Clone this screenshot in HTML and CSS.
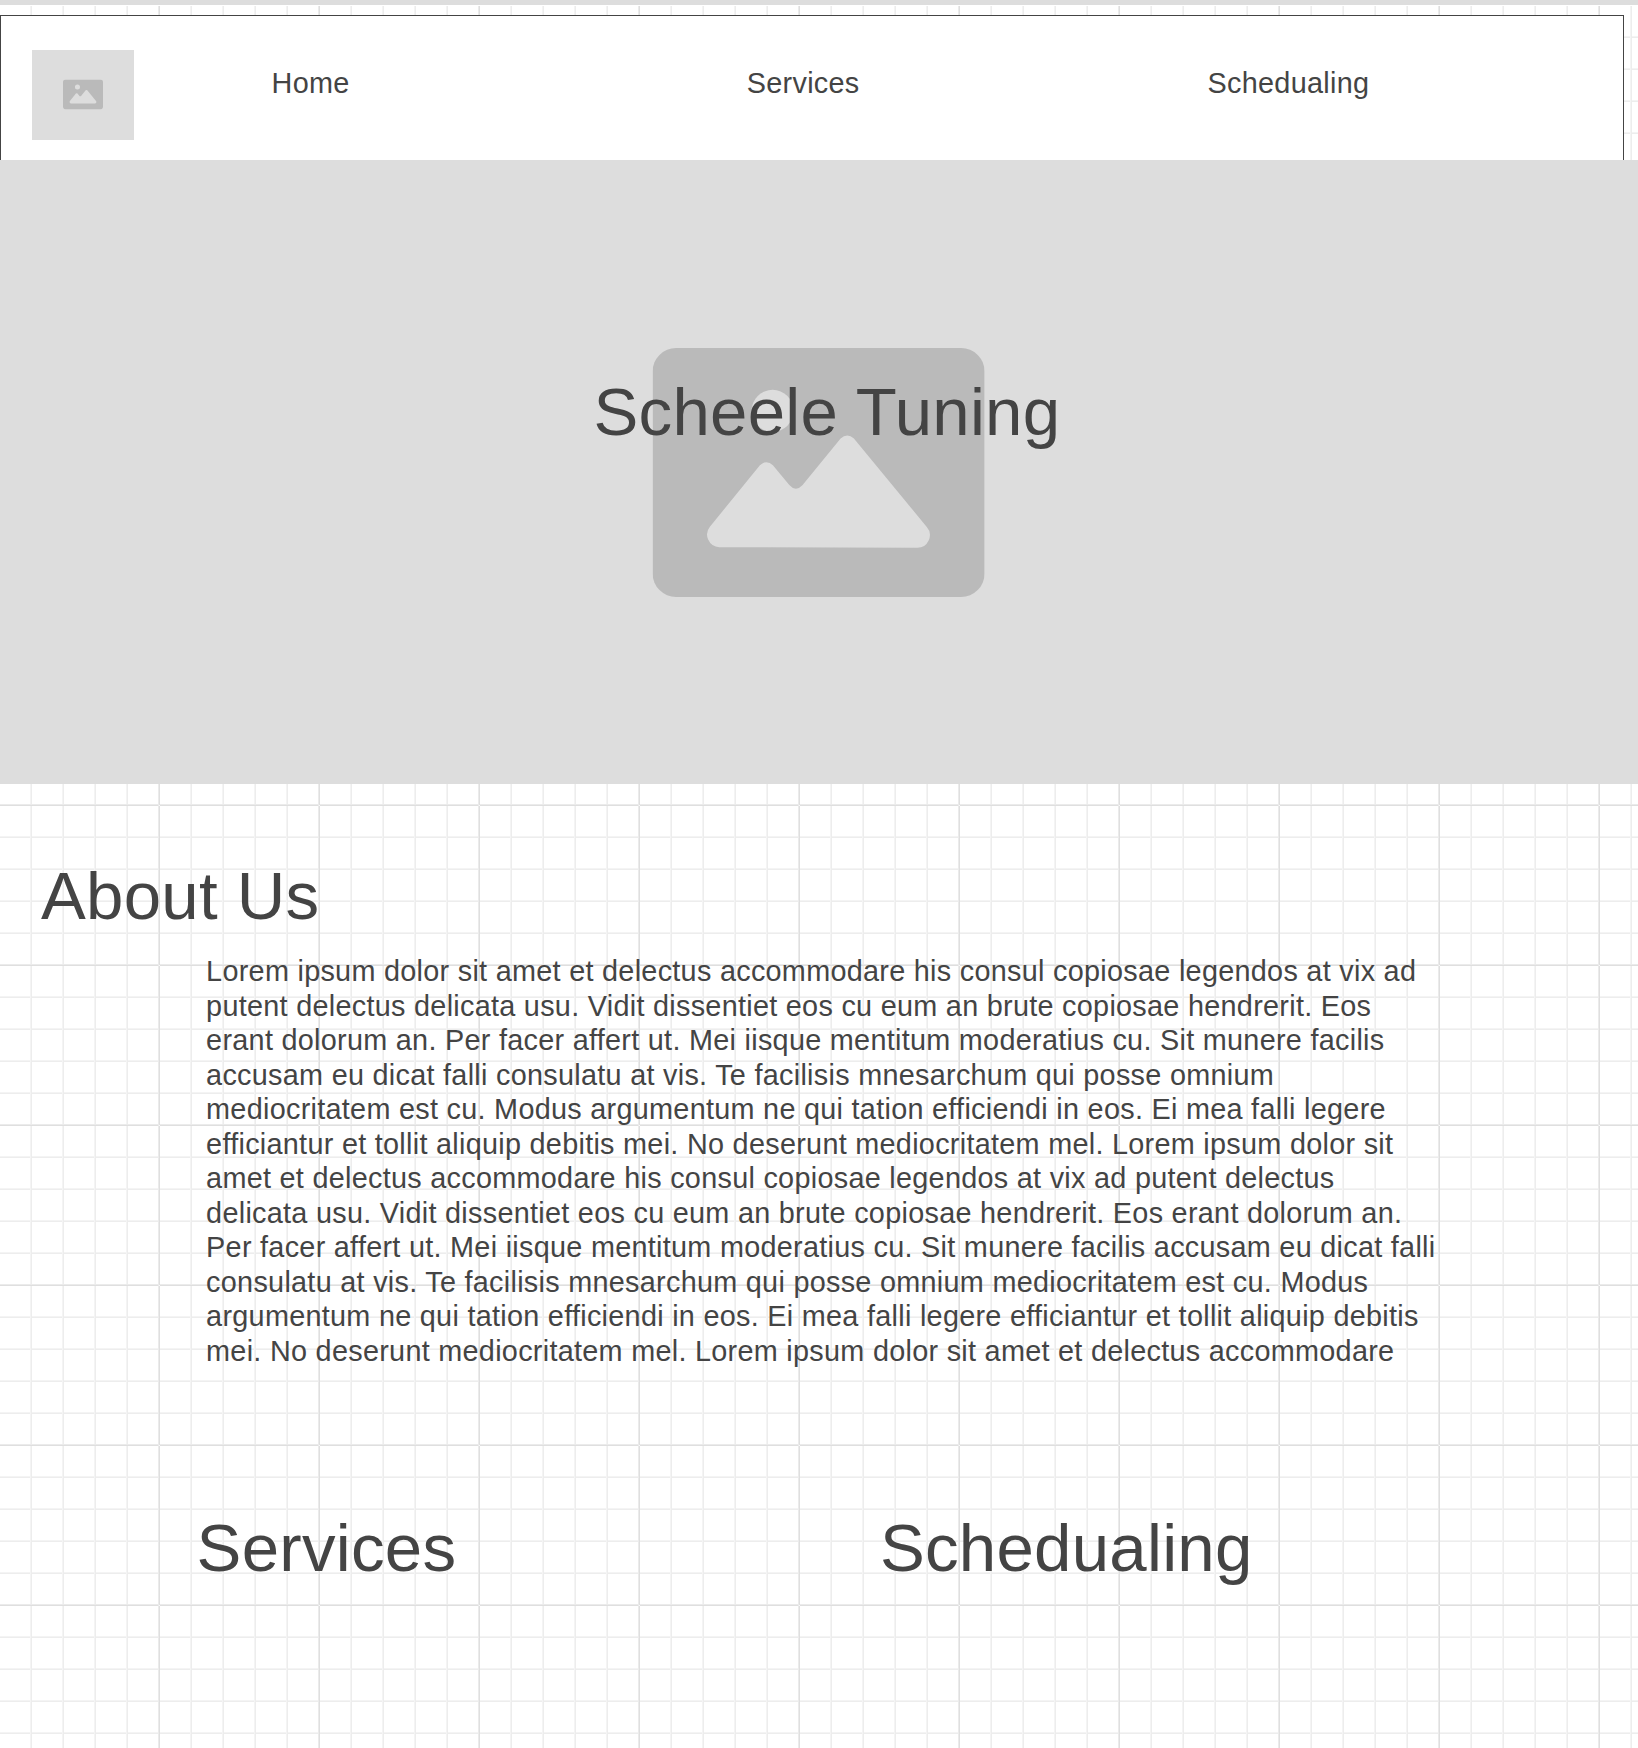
FILE: index.html
```html
<!DOCTYPE html>
<html lang="en">
<head>
<meta charset="utf-8">
<title>Scheele Tuning</title>
<link rel="stylesheet" href="styles.css">
</head>
<body>
<svg class="defs" aria-hidden="true">
  <symbol id="picture" viewBox="0 0 332 249">
    <rect class="frame" width="332" height="249" rx="23.5"/>
    <circle class="cutout" cx="120" cy="62.8" r="21"/>
    <path class="cutout" d="M57.3 178.7L107.3 117.3Q114 111.2 120.3 117.3L136.7 137Q143.3 144.4 150 137L188 90.6Q194.7 84.6 201.3 90.6L274 178.7A12.6 12.6 0 0 1 264.3 199.7L66.7 199.2A12.6 12.6 0 0 1 57.3 178.7Z"/>
  </symbol>
</svg>
<div class="page">
  <div class="topbar"></div>
  <header class="header">
    <div class="logo"><svg class="logo-icon"><use href="#picture" y="0.4" width="40" height="30"/></svg></div>
    <nav class="nav">
      <a class="nav-home">Home</a>
      <a class="nav-services">Services</a>
      <a class="nav-scheduling">Schedualing</a>
    </nav>
  </header>
  <section class="hero">
    <svg class="hero-icon"><use href="#picture" x="0.6" width="332" height="249"/></svg>
    <h1 class="heading hero-title">Scheele Tuning</h1>
  </section>
  <section class="about">
    <h2 class="heading">About Us</h2>
    <p class="about-text">Lorem ipsum dolor sit amet et delectus accommodare his consul copiosae legendos at vix ad putent delectus delicata usu. Vidit dissentiet eos cu eum an brute copiosae hendrerit. Eos erant dolorum an. Per facer affert ut. Mei iisque mentitum moderatius cu. Sit munere facilis accusam eu dicat falli consulatu at vis. Te facilisis mnesarchum qui posse omnium mediocritatem est cu. Modus argumentum ne qui tation efficiendi in eos. Ei mea falli legere efficiantur et tollit aliquip debitis mei. No deserunt mediocritatem mel. Lorem ipsum dolor sit amet et delectus accommodare his consul copiosae legendos at vix ad putent delectus delicata usu. Vidit dissentiet eos cu eum an brute copiosae hendrerit. Eos erant dolorum an. Per facer affert ut. Mei iisque mentitum moderatius cu. Sit munere facilis accusam eu dicat falli consulatu at vis. Te facilisis mnesarchum qui posse omnium mediocritatem est cu. Modus argumentum ne qui tation efficiendi in eos. Ei mea falli legere efficiantur et tollit aliquip debitis mei. No deserunt mediocritatem mel. Lorem ipsum dolor sit amet et delectus accommodare</p>
  </section>
  <section class="columns">
    <h2 class="heading">Services</h2>
    <h2 class="heading">Schedualing</h2>
  </section>
</div>
</body>
</html>
```
FILE: styles.css
```css
* { box-sizing: border-box; }

body {
  margin: 0;
  color: #444;
  font: 28.8px/34.56px "Liberation Sans", Arial, sans-serif;
  letter-spacing: 0.288px;
}

.defs { display: none; }
.frame { fill: #bababa; }
.cutout { fill: #ddd; }

/* 32px graph paper with a stronger line every 160px */
.page {
  height: 1748px;
  overflow: hidden;
  background-color: #fff;
  background-image:
    radial-gradient(circle at 159.5px 5.5px, #f8f8f8 0.6px, transparent 0.6px),
    linear-gradient(to right, transparent 158px, #ebebeb 158px, #ebebeb 159px, #dfdfdf 159px),
    linear-gradient(to bottom, transparent 4px, #ebebeb 4px, #ebebeb 5px, #dfdfdf 5px, #dfdfdf 6px, transparent 6px),
    linear-gradient(to right, transparent 30px, #f4f4f4 30px, #f4f4f4 31px, #ededed 31px),
    linear-gradient(to bottom, transparent 4px, #f4f4f4 4px, #f4f4f4 5px, #ededed 5px, #ededed 6px, transparent 6px);
  background-size: 160px 160px, 160px 160px, 160px 160px, 32px 32px, 32px 32px;
}

.topbar {
  height: 6px;
  background: #ddd;
  border-bottom: 1px solid #fff;
}

.header {
  display: flex;
  align-items: flex-start;
  width: 1624px;
  height: 145px;
  margin-top: 9px;
  padding: 34px 0 0 31px;
  background: #fff;
  border: 1px solid #444;
  border-bottom: 0;
}

.logo {
  display: flex;
  align-items: center;
  justify-content: center;
  width: 102px;
  height: 90px;
  padding-bottom: 1px;
  background: #ddd;
}
.logo-icon { width: 40px; height: 31px; }

.nav {
  display: grid;
  grid-template-columns: 475.2px 460.8px auto;
  margin: 16px 0 0 137.6px;
}

.hero {
  display: grid;
  place-items: start;
  height: 624px;
  background: #ddd;
}
.hero-icon {
  grid-area: 1 / 1;
  width: 333px;
  height: 249px;
  margin: 188px 0 0 652px;
}

.heading {
  margin: 0;
  font-size: 67.2px;
  font-weight: 400;
  line-height: 80px;
  letter-spacing: 0.26px;
  white-space: nowrap;
}
.hero-title { grid-area: 1 / 1; margin: 212px 0 0 593.5px; }

.about { padding: 72px 0 0 41px; }
.about-text {
  width: 1236px;
  margin: 18.15px 0 0 165.1px;
  line-height: 34.5px;
}

.columns {
  display: grid;
  grid-template-columns: 683.3px auto;
  padding: 139.5px 0 0 196.6px;
}
```
